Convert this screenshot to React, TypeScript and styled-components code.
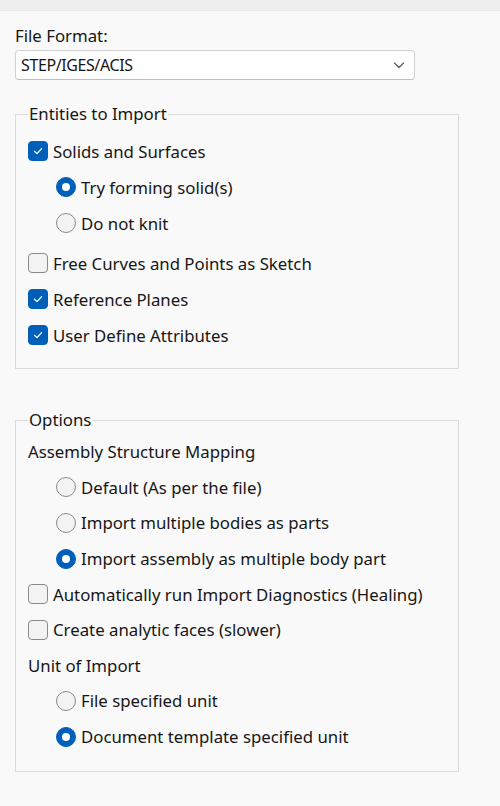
import React from 'react';
import styled, { createGlobalStyle } from 'styled-components';

const GlobalStyle = createGlobalStyle`
  html, body {
    margin: 0;
    padding: 0;
    background: #f9f9f9;
  }
  body {
    font-family: 'Noto Sans', 'Open Sans', sans-serif;
    font-size: 16.8px;
    color: #161616;
  }
`;

const Page = styled.div`
  width: 500px;
  height: 806px;
  background: #f9f9f9;
  overflow: hidden;
`;

const TopBar = styled.div`
  height: 10px;
  background: #eeeeee;
  border-bottom: 1px solid #e6e6e6;
`;

const Content = styled.div`
  padding: 15px 0 0 15px;
  display: flex;
  flex-direction: column;
`;

const FieldLabel = styled.div`
  line-height: 20px;
`;

const Select = styled.div`
  margin-top: 4px;
  width: 400px;
  height: 30px;
  box-sizing: border-box;
  background: #ffffff;
  border: 1px solid #d0d0d0;
  border-bottom-color: #bdbdbd;
  border-radius: 4px;
  display: flex;
  align-items: center;
  justify-content: space-between;
  padding: 0 8px 0 5px;
  font-size: 16px;
  letter-spacing: -0.4px;
`;

const Group = styled.fieldset<{ $top: number }>`
  margin: ${p => p.$top}px 0 0 0;
  width: 444px;
  box-sizing: border-box;
  border: 1px solid #dadada;
  padding: 0 12px 0 12px;
  min-width: 0;
`;

const Legend = styled.legend`
  padding: 0 1px;
  line-height: 20px;
`;

const Rows = styled.div<{ $padTop: number; $padBottom: number }>`
  display: flex;
  flex-direction: column;
  padding: ${p => p.$padTop}px 0 ${p => p.$padBottom}px 0;
`;

const Row = styled.div<{ $indent?: boolean; $h: number }>`
  height: ${p => p.$h}px;
  display: flex;
  align-items: center;
  gap: 5px;
  padding-left: ${p => (p.$indent ? 28 : 0)}px;
  white-space: nowrap;
`;

const Spacer = styled.div<{ $h: number }>`
  height: ${p => p.$h}px;
`;

const Box = styled.span<{ $checked?: boolean }>`
  width: 20px;
  height: 20px;
  box-sizing: border-box;
  border-radius: 4px;
  flex: none;
  display: flex;
  align-items: center;
  justify-content: center;
  background: ${p => (p.$checked ? '#005fb8' : '#f3f3f3')};
  border: 1px solid ${p => (p.$checked ? '#005fb8' : '#8a8a8a')};
`;

const Radio = styled.span<{ $checked?: boolean }>`
  width: 20px;
  height: 20px;
  box-sizing: border-box;
  border-radius: 50%;
  flex: none;
  display: flex;
  align-items: center;
  justify-content: center;
  background: ${p => (p.$checked ? '#005fb8' : '#f3f3f3')};
  border: 1px solid ${p => (p.$checked ? '#005fb8' : '#8a8a8a')};
`;

const Dot = styled.span`
  width: 8px;
  height: 8px;
  border-radius: 50%;
  background: #ffffff;
`;

const Check = () => (
  <svg width="12" height="12" viewBox="0 0 12 12">
    <path d="M2.5 6.2 L5 8.6 L9.6 3.6" fill="none" stroke="#ffffff" strokeWidth="1.3" strokeLinecap="round" strokeLinejoin="round" />
  </svg>
);

const Chevron = () => (
  <svg width="14" height="14" viewBox="0 0 14 14">
    <path d="M2.5 5 L7 9.5 L11.5 5" fill="none" stroke="#5a5a5a" strokeWidth="1.2" strokeLinecap="round" strokeLinejoin="round" />
  </svg>
);

const CheckRow = ({ label, checked, h = 36 }: { label: string; checked?: boolean; h?: number }) => (
  <Row $h={h}>
    <Box $checked={checked}>{checked && <Check />}</Box>
    <span>{label}</span>
  </Row>
);

const RadioRow = ({ label, checked, h = 36 }: { label: string; checked?: boolean; h?: number }) => (
  <Row $indent $h={h}>
    <Radio $checked={checked}>{checked && <Dot />}</Radio>
    <span>{label}</span>
  </Row>
);

const TextRow = ({ label, h = 36 }: { label: string; h?: number }) => (
  <Row $h={h}>
    <span>{label}</span>
  </Row>
);

export default function App() {
  return (
    <Page>
      <GlobalStyle />
      <TopBar />
      <Content>
        <FieldLabel>File Format:</FieldLabel>
        <Select>
          <span>STEP/IGES/ACIS</span>
          <Chevron />
        </Select>

        <Group $top={24}>
          <Legend>Entities to Import</Legend>
          <Rows $padTop={9} $padBottom={15}>
            <CheckRow label="Solids and Surfaces" checked />
            <RadioRow label="Try forming solid(s)" checked />
            <RadioRow label="Do not knit" />
            <Spacer $h={4} />
            <CheckRow label="Free Curves and Points as Sketch" />
            <CheckRow label="Reference Planes" checked />
            <CheckRow label="User Define Attributes" checked />
          </Rows>
        </Group>

        <Group $top={41}>
          <Legend>Options</Legend>
          <Rows $padTop={4} $padBottom={17}>
            <TextRow label="Assembly Structure Mapping" h={35.6} />
            <RadioRow label="Default (As per the file)" h={35.6} />
            <RadioRow label="Import multiple bodies as parts" h={35.6} />
            <RadioRow label="Import assembly as multiple body part" checked h={35.6} />
            <CheckRow label="Automatically run Import Diagnostics (Healing)" h={35.6} />
            <CheckRow label="Create analytic faces (slower)" h={35.6} />
            <TextRow label="Unit of Import" h={35.6} />
            <RadioRow label="File specified unit" h={35.6} />
            <RadioRow label="Document template specified unit" checked h={35.6} />
          </Rows>
        </Group>
      </Content>
    </Page>
  );
}
